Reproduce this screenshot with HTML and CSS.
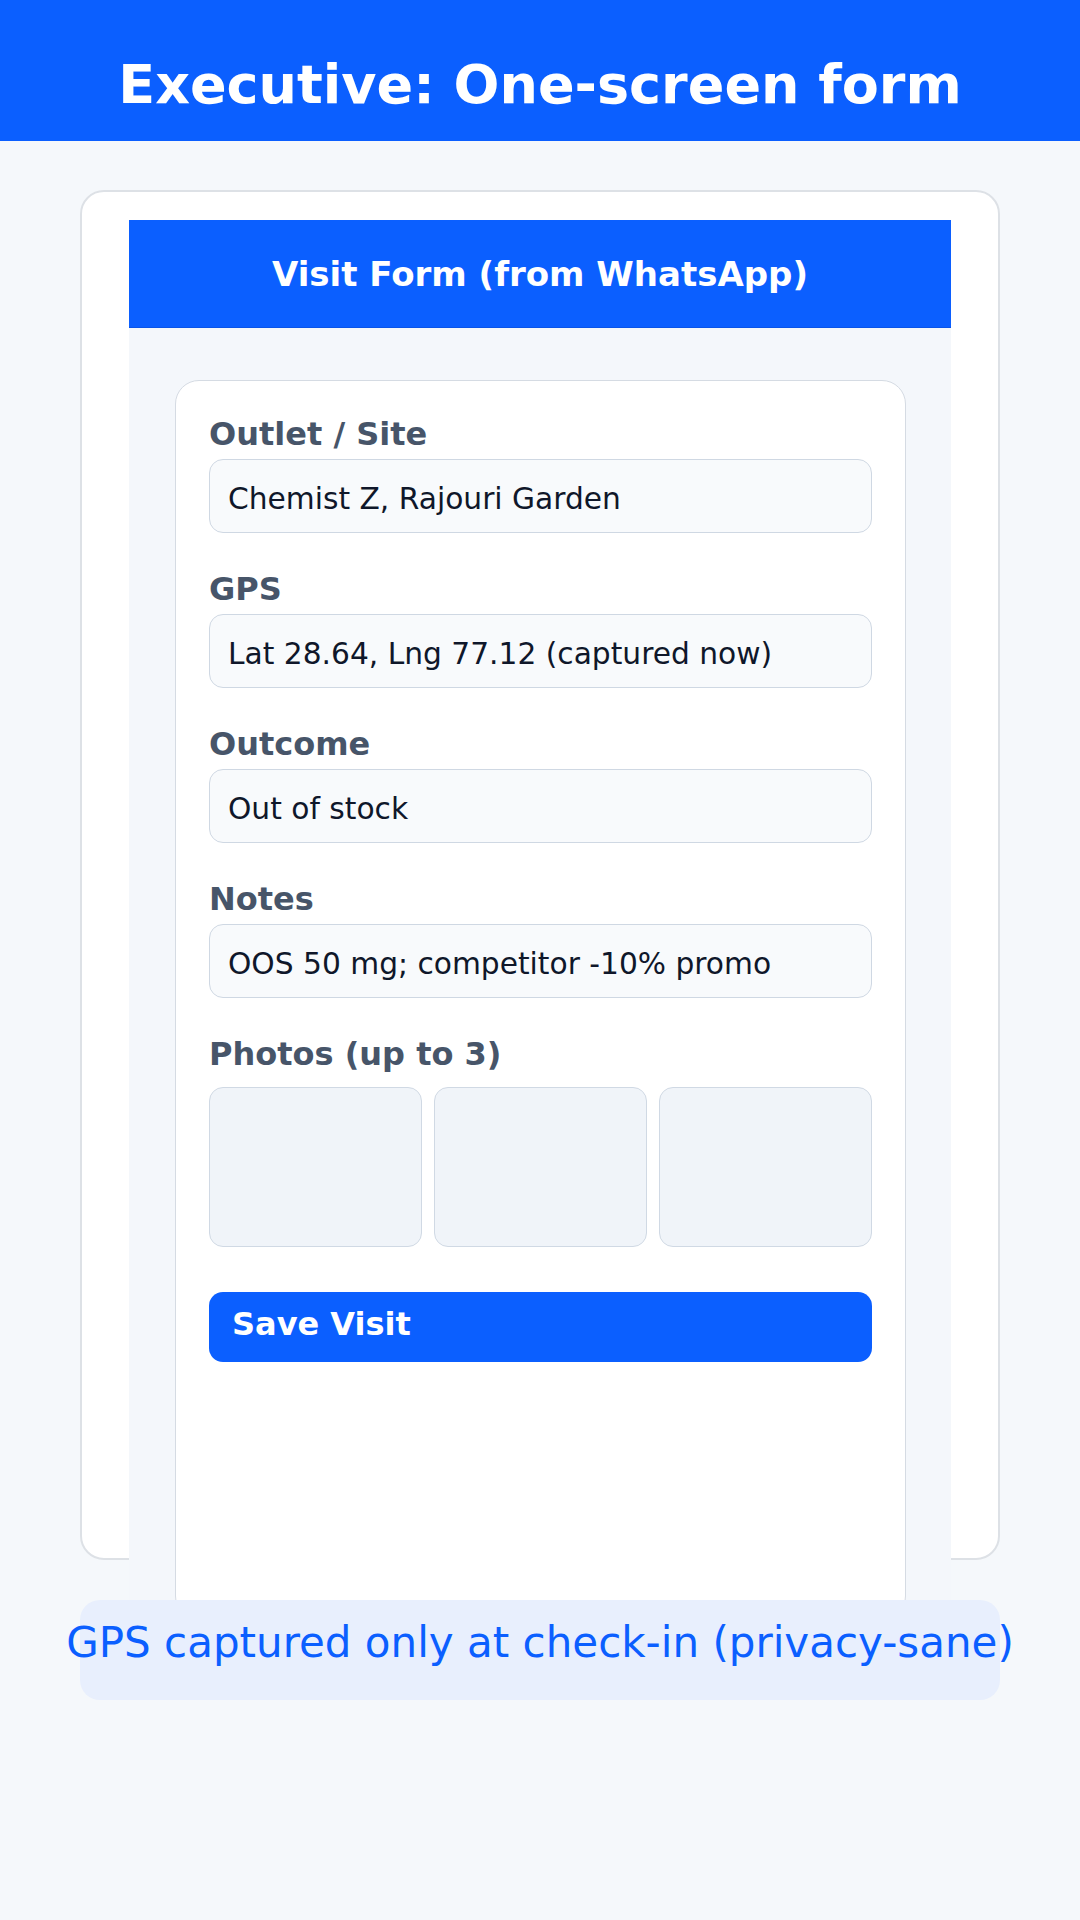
FILE: index.html
```html
<!DOCTYPE html>
<html lang="en">
<head>
<meta charset="utf-8">
<title>Executive: One-screen form</title>
<link rel="stylesheet" href="styles.css">
</head>
<body>
<header class="top-bar">
  <h1 class="top-title">Executive: One-screen form</h1>
</header>
<main class="page">
  <section class="device">
    <div class="screen">
      <div class="screen-head">Visit Form (from WhatsApp)</div>
      <div class="screen-body">
        <form class="form-card">
          <div class="field">
            <div class="label">Outlet / Site</div>
            <div class="input">Chemist Z, Rajouri Garden</div>
          </div>
          <div class="field">
            <div class="label">GPS</div>
            <div class="input">Lat 28.64, Lng 77.12 (captured now)</div>
          </div>
          <div class="field">
            <div class="label">Outcome</div>
            <div class="input">Out of stock</div>
          </div>
          <div class="field">
            <div class="label">Notes</div>
            <div class="input">OOS 50 mg; competitor -10% promo</div>
          </div>
          <div class="field">
            <div class="label">Photos (up to 3)</div>
            <div class="photos">
              <div class="photo"></div>
              <div class="photo"></div>
              <div class="photo"></div>
            </div>
          </div>
          <div class="save-btn">Save Visit</div>
        </form>
      </div>
    </div>
  </section>
  <div class="note"><span class="note-text">GPS captured only at check-in (privacy-sane)</span></div>
</main>
</body>
</html>
```

FILE: styles.css
```css
* { box-sizing: border-box; }
html, body {
  margin: 0;
  padding: 0;
  background: #f5f8fb;
  font-family: "DejaVu Sans", "Liberation Sans", sans-serif;
}
body { min-height: 1920px; }

.top-bar {
  height: 141px;
  background: #0b5fff;
  padding-top: 53px;
}
.top-title {
  margin: 0;
  text-align: center;
  color: #ffffff;
  font-size: 54px;
  line-height: 64px;
  font-weight: 700;
}

.page {
  padding: 49px 80px 0;
}

.device {
  height: 1370px;
  background: #ffffff;
  border: 2px solid #dde1e6;
  border-radius: 24px;
  padding: 28px 47px 0;
}

.screen {
  background: #f4f7fb;
  height: 1400px;
}
.screen-head {
  height: 108px;
  background: #0b5fff;
  border-bottom: 1px solid #0954e8;
  padding-top: 34px;
  text-align: center;
  color: #ffffff;
  font-size: 34px;
  line-height: 40px;
  font-weight: 700;
}
.screen-body {
  padding: 52px 45px 0 46px;
}

.form-card {
  margin: 0;
  height: 1240px;
  background: #ffffff;
  border: 1px solid #d5dbe3;
  border-radius: 24px;
  padding: 33px 33px 0;
  display: flex;
  flex-direction: column;
  gap: 36px;
}

.field {
  display: flex;
  flex-direction: column;
}
.label {
  color: #475569;
  font-size: 32px;
  line-height: 36px;
  font-weight: 700;
  padding-top: 2px;
  margin-bottom: 7px;
}
.input {
  height: 74px;
  background: #f8fafc;
  border: 1px solid #cfd8e3;
  border-radius: 14px;
  padding: 22px 18px 0;
  color: #0f172a;
  font-size: 29.7px;
  line-height: 34px;
  white-space: nowrap;
}

.photos {
  margin-top: 8px;
  display: grid;
  grid-template-columns: repeat(3, 1fr);
  gap: 12px;
}
.photo {
  height: 160px;
  background: #f0f4f9;
  border: 1px solid #d0d9e4;
  border-radius: 14px;
}

.save-btn {
  margin-top: 9px;
  height: 70px;
  background: #0b5fff;
  border-radius: 14px;
  padding: 14px 23px 0;
  color: #ffffff;
  font-size: 32px;
  line-height: 36px;
  font-weight: 700;
}

.note {
  position: relative;
  margin-top: 40px;
  height: 100px;
  background: #e8effd;
  border-radius: 20px;
  padding-top: 18px;
  display: flex;
  justify-content: center;
}
.note-text {
  flex: none;
  white-space: nowrap;
  color: #0b5fff;
  font-size: 42px;
  line-height: 50px;
}
```
